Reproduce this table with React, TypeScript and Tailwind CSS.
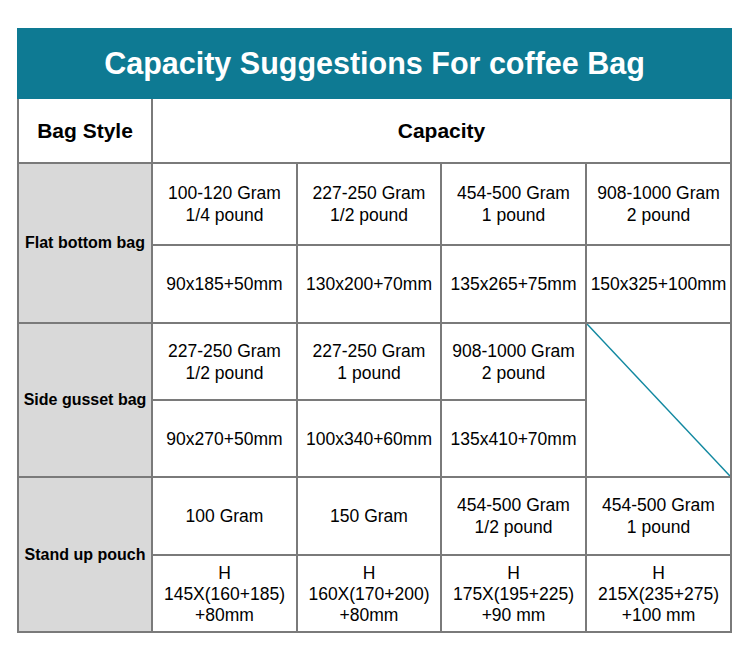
const cell = 'flex flex-col items-center justify-center bg-white text-center text-[17.5px] leading-[22px] text-black';
const tall = 'flex flex-col items-center justify-center bg-white pt-[2px] text-center text-[17.5px] leading-[21px] text-black';
const side = 'row-span-2 flex items-center justify-center bg-[#d9d9d9] text-center text-[16px] font-bold text-black';

function Cell({ lines }: { lines: string[] }) {
  return (
    <div className={lines.length > 2 ? tall : cell}>
      {lines.map((l, i) => (
        <span key={i}>{l}</span>
      ))}
    </div>
  );
}

export default function App() {
  return (
    <div className="min-h-[660px] w-[750px] bg-white pl-[17px] pt-[28px]" style={{ fontFamily: '"Liberation Sans", Arial, sans-serif' }}>
      <div className="flex h-[71px] w-[715px] items-center justify-center bg-[#0e7a93] text-[30.5px] font-bold text-white">
        Capacity Suggestions For coffee Bag
      </div>
      <div className="grid w-[715px] grid-cols-[132px_143px_142px_143px_143px] grid-rows-[63px_80px_76px_75px_75px_76px_75px] gap-[2px] bg-[#7a7a7a] px-[2px] pb-[2px]">
        <div className="flex items-center justify-center bg-white text-[21px] font-bold">Bag Style</div>
        <div className="col-span-4 flex items-center justify-center bg-white text-[21px] font-bold">Capacity</div>

        <div className={side}>Flat bottom bag</div>
        <Cell lines={['100-120 Gram', '1/4 pound']} />
        <Cell lines={['227-250 Gram', '1/2 pound']} />
        <Cell lines={['454-500 Gram', '1 pound']} />
        <Cell lines={['908-1000 Gram', '2 pound']} />
        <Cell lines={['90x185+50mm']} />
        <Cell lines={['130x200+70mm']} />
        <Cell lines={['135x265+75mm']} />
        <Cell lines={['150x325+100mm']} />

        <div className={side}>Side gusset bag</div>
        <Cell lines={['227-250 Gram', '1/2 pound']} />
        <Cell lines={['227-250 Gram', '1 pound']} />
        <Cell lines={['908-1000 Gram', '2 pound']} />
        <div className="relative row-span-2 bg-white">
          <svg className="absolute inset-0 h-full w-full" viewBox="0 0 100 100" preserveAspectRatio="none">
            <line x1="0" y1="0" x2="100" y2="100" stroke="#1188a0" strokeWidth="1.5" vectorEffect="non-scaling-stroke" />
          </svg>
        </div>
        <Cell lines={['90x270+50mm']} />
        <Cell lines={['100x340+60mm']} />
        <Cell lines={['135x410+70mm']} />

        <div className={side}>Stand up pouch</div>
        <Cell lines={['100 Gram']} />
        <Cell lines={['150 Gram']} />
        <Cell lines={['454-500 Gram', '1/2 pound']} />
        <Cell lines={['454-500 Gram', '1 pound']} />
        <Cell lines={['H', '145X(160+185)', '+80mm']} />
        <Cell lines={['H', '160X(170+200)', '+80mm']} />
        <Cell lines={['H', '175X(195+225)', '+90 mm']} />
        <Cell lines={['H', '215X(235+275)', '+100 mm']} />
      </div>
    </div>
  );
}
